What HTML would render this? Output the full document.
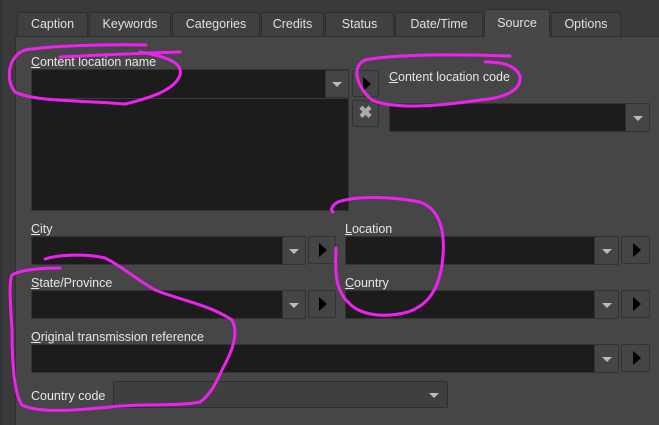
<!DOCTYPE html>
<html><head><meta charset="utf-8"><style>
*{margin:0;padding:0;box-sizing:border-box}
html,body{width:659px;height:425px;overflow:hidden}
body{background:#3a3a3a;position:relative;font-family:"Liberation Sans",sans-serif;font-size:12.5px;color:#e6e6e6}
.a{position:absolute}
.tab{position:absolute;top:12px;height:24px;background:#404040;border:1px solid #2e2e2e;border-bottom:none;border-radius:3px 3px 0 0;text-align:center;line-height:23px;color:#e0e0e0}
.tab.act{top:9px;height:28px;background:#474747;z-index:2;line-height:27px}
.panel{position:absolute;left:15px;top:36px;width:644px;height:389px;background:#464646;border:1px solid #2f2f2f;border-right:none;border-bottom:none}
.in{position:absolute;background:#1c1c1c;border:1px solid #333;border-radius:2px}
.dd{position:absolute;background:#454545;border:1px solid #333;border-radius:2px}
.dd:after{content:"";position:absolute;left:50%;top:50%;margin:-2px 0 0 -5px;border-left:5px solid transparent;border-right:5px solid transparent;border-top:5px solid #bbb}
.pb{position:absolute;background:#454545;border:1px solid #333;border-radius:2px}
.pb:after{content:"";position:absolute;left:50%;top:50%;margin:-7px 0 0 -3px;border-top:7px solid transparent;border-bottom:7px solid transparent;border-left:8px solid #000}
.lb{position:absolute}
u{text-decoration:underline}
.cc:after{left:auto !important;right:8px}
</style></head><body>
<div class="a" style="left:0;top:0;width:2px;height:425px;background:#2c3438"></div>
<div class="panel"></div>
<div class="tab" style="left:17px;width:71px">Caption</div>
<div class="tab" style="left:89px;width:82px">Keywords</div>
<div class="tab" style="left:172px;width:88px">Categories</div>
<div class="tab" style="left:261px;width:63px">Credits</div>
<div class="tab" style="left:325px;width:69px">Status</div>
<div class="tab" style="left:395px;width:88px">Date/Time</div>
<div class="tab act" style="left:484px;width:66px">Source</div>
<div class="tab" style="left:551px;width:70px">Options</div>

<div class="lb" style="left:31px;top:55px"><u>C</u>ontent location name</div>
<div class="in" style="left:31px;top:69px;width:318px;height:142px"></div>
<div class="dd" style="left:325px;top:70px;width:24px;height:28px"></div>
<div class="a" style="left:31px;top:98px;width:318px;height:1px;background:#3a3a3a"></div>
<div class="pb" style="left:352px;top:70px;width:27px;height:27px"></div>
<div class="a" style="left:352px;top:100px;width:27px;height:27px;background:#454545;border:1px solid #333;border-radius:2px;color:#aaa;font-size:17px;line-height:24px;text-align:center;font-weight:bold">✖</div>
<div class="lb" style="left:389px;top:70px"><u>C</u>ontent location code</div>
<div class="in" style="left:389px;top:103px;width:261px;height:29px"></div>
<div class="dd" style="left:625px;top:103px;width:25px;height:29px"></div>

<div class="lb" style="left:31px;top:222px"><u>C</u>ity</div>
<div class="in" style="left:31px;top:236px;width:275px;height:29px"></div>
<div class="dd" style="left:282px;top:236px;width:24px;height:29px"></div>
<div class="pb" style="left:308px;top:236px;width:28px;height:28px"></div>
<div class="lb" style="left:345px;top:222px"><u>L</u>ocation</div>
<div class="in" style="left:345px;top:236px;width:274px;height:29px"></div>
<div class="dd" style="left:594px;top:236px;width:25px;height:29px"></div>
<div class="pb" style="left:621px;top:236px;width:29px;height:28px"></div>

<div class="lb" style="left:31px;top:276px"><u>S</u>tate/Province</div>
<div class="in" style="left:31px;top:290px;width:275px;height:29px"></div>
<div class="dd" style="left:282px;top:290px;width:24px;height:29px"></div>
<div class="pb" style="left:308px;top:290px;width:28px;height:28px"></div>
<div class="lb" style="left:345px;top:276px"><u>C</u>ountry</div>
<div class="in" style="left:345px;top:290px;width:274px;height:29px"></div>
<div class="dd" style="left:594px;top:290px;width:25px;height:29px"></div>
<div class="pb" style="left:621px;top:290px;width:29px;height:28px"></div>

<div class="lb" style="left:31px;top:330px"><u>O</u>riginal transmission reference</div>
<div class="in" style="left:31px;top:344px;width:588px;height:29px"></div>
<div class="dd" style="left:594px;top:344px;width:25px;height:29px"></div>
<div class="pb" style="left:621px;top:344px;width:29px;height:28px"></div>

<div class="lb" style="left:31px;top:389px">Country code</div>
<div class="dd cc" style="left:113px;top:381px;width:335px;height:27px;background:#3f3f3f;border-color:#2e2e2e"></div>

<svg class="a" style="left:0;top:0;z-index:5" width="659" height="425" fill="none" stroke="#ee22ee" stroke-width="3" stroke-linecap="round" stroke-linejoin="round">
<path d="M146 45 C100 44 50 46 25 50 C8 56 5 80 15 92 C35 102 80 100 125 104 C150 98 175 90 180 75 C183 64 170 57 140 52"/>
<path d="M180 52 C120 54 80 56 60 57"/>
<path d="M510 56 C450 54 395 54 365 60 C352 66 355 85 372 100 C395 110 440 106 480 100 C505 98 522 90 520 76 C515 64 500 62 485 62"/>
<path d="M338 202 C355 196 390 196 420 202 C442 210 446 235 442 265 C438 290 428 305 408 312 C385 318 360 316 348 302 C335 290 335 270 336 248"/>
<path d="M338 202 C332 205 330 210 333 212"/>
<path d="M45 259 C60 254 90 254 105 258 C120 265 130 275 155 290 C180 300 210 305 232 320 C240 335 230 355 222 370 C215 385 210 395 200 402 C180 406 150 404 120 406 C80 410 40 414 22 405 C15 395 12 370 12 330 C10 300 9 280 12 275 C20 270 40 268 60 268"/>
</svg>
</body></html>
